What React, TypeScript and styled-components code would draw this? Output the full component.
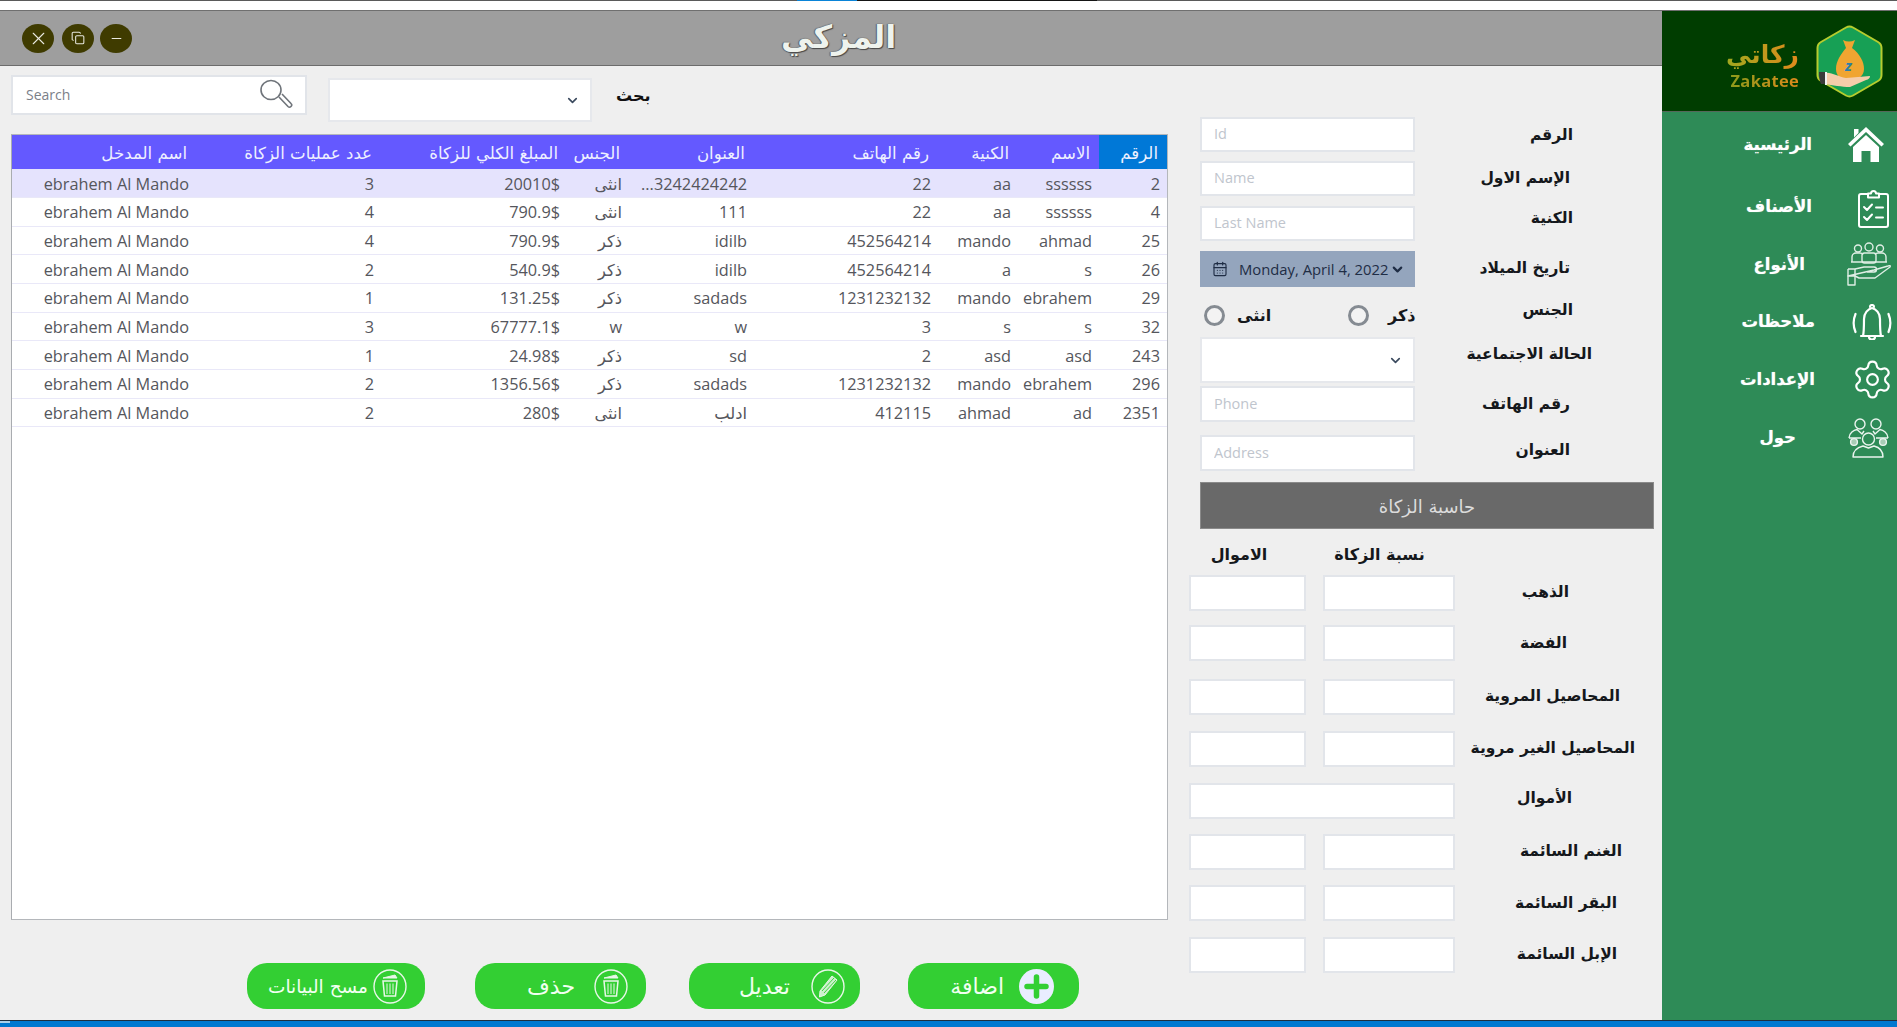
import { FC, ReactElement } from "react";
import styled, { createGlobalStyle } from "styled-components";
import { Settings, CalendarDays, ChevronDown, Copy, X, Minus } from "lucide-react";

const GlobalStyle = createGlobalStyle`
  html, body {
    margin: 0;
    padding: 0;
    height: 100%;
    overflow: hidden;
    background: #efefef;
    font-family: "Open Sans", "DejaVu Sans", sans-serif;
  }
  * { box-sizing: border-box; }
`;

const Page = styled.div`
  width: 1897px;
  height: 1027px;
  display: flex;
  flex-direction: column;
`;

const TopStrip = styled.div`
  height: 11px;
  flex: none;
  background: #fff;
  border-bottom: 1px solid #6f6f6f;
`;

const TopLine = styled.div`
  height: 1px;
  display: flex;
  background: #5a5a5a;
`;

const TopLineGap = styled.div`
  width: 797px;
`;

const TopLineTab = styled.div<{ $w: number; $c: string }>`
  width: ${(p) => p.$w}px;
  background: ${(p) => p.$c};
`;

const Middle = styled.div`
  flex: 1;
  min-height: 0;
  display: flex;
`;

const MainColumn = styled.div`
  width: 1662px;
  display: flex;
  flex-direction: column;
`;

const TitleBar = styled.header`
  height: 55px;
  flex: none;
  background: #9e9e9e;
  border-bottom: 1px solid #6c6c6c;
  display: flex;
  align-items: center;
  padding-left: 22px;
  position: relative;
`;

const WindowButton = styled.div<{ $ml?: number }>`
  width: 32px;
  height: 29px;
  border-radius: 50%;
  margin-left: ${(p) => p.$ml ?? 0}px;
  background: #3f3b00;
  color: #e9e9e0;
  display: flex;
  align-items: center;
  justify-content: center;
`;

const AppTitle = styled.h1`
  position: absolute;
  left: 781px;
  top: 4px;
  margin: 0;
  font-family: "DejaVu Sans", sans-serif;
  font-size: 32px;
  line-height: 44px;
  font-weight: 700;
  color: #eef3ee;
  text-shadow: 0 0 1px #3d3d3d, 1px 1px 1px #4a4a4a, -1px 0 1px #6a6a6a;
`;

const Content = styled.div`
  flex: 1;
  min-height: 0;
  display: flex;
`;

const LeftPane = styled.section`
  width: 1180px;
  flex: none;
  padding: 9px 0 0 11px;
`;

const SearchRow = styled.div`
  height: 47px;
  display: flex;
  align-items: flex-start;
`;

const SearchBox = styled.div`
  width: 296px;
  height: 40px;
  background: #fff;
  border: 2px solid #e1e4e9;
  display: flex;
  align-items: center;
  padding: 0 12px 2px 11px;
`;

const SearchInput = styled.input`
  flex: 1;
  min-width: 0;
  border: none;
  outline: none;
  font-family: "Open Sans", sans-serif;
  font-size: 14px;
  color: #444;
  &::placeholder { color: #7b8088; opacity: 1; }
`;

const PickBox = styled.div<{ $w: number; $h: number }>`
  width: ${(p) => p.$w}px;
  height: ${(p) => p.$h}px;
  background: #fff;
  border: 2px solid #e6e8ec;
  display: flex;
  align-items: center;
  justify-content: flex-end;
  color: #3b4a5e;
  padding-right: 10px;
`;

const SearchPick = styled.div`
  margin: 3px 0 0 21px;
`;

const SearchLabel = styled.span`
  margin: 9px 0 0 24px;
  font-family: "DejaVu Sans", sans-serif;
  font-size: 16px;
  line-height: 24px;
  font-weight: 700;
  color: #111;
`;

const TableFrame = styled.div`
  margin-top: 12px;
  width: 1157px;
  height: 786px;
  background: #fff;
  border: 1px solid #b4b7bb;
  border-left-color: #a9acb0;
`;

const Grid = styled.table`
  width: 1155px;
  table-layout: fixed;
  border-collapse: collapse;
  direction: rtl;
`;

const HeadCell = styled.th<{ $active?: boolean; $w: number }>`
  width: ${(p) => p.$w}px;
  height: 34px;
  padding: 2px 9px 0 0;
  background: ${(p) => (p.$active ? "#0078d7" : "#6459ff")};
  color: #eef0ff;
  font-family: "DejaVu Sans", sans-serif;
  font-size: 16.6px;
  font-weight: 400;
  text-align: right;
  white-space: nowrap;
`;

const BodyRow = styled.tr<{ $selected?: boolean }>`
  height: 28.67px;
  background: ${(p) => (p.$selected ? "#e5e3fd" : "#fff")};
  border-bottom: 1px solid #e9e8f8;
`;

const BodyCell = styled.td`
  padding: 1px 7px 0 0;
  font-family: "Open Sans", "DejaVu Sans", sans-serif;
  font-size: 16.3px;
  color: #55565c;
  text-align: right;
  white-space: nowrap;
  overflow: hidden;
`;

const ActionRow = styled.div`
  margin-top: 43px;
  padding-left: 236px;
  display: flex;
`;

const ActionButton = styled.button<{ $w: number; $ml?: number; $gap: number; $pr: number; $fs?: number }>`
  width: ${(p) => p.$w}px;
  height: 46px;
  margin-left: ${(p) => p.$ml ?? 0}px;
  padding: 0 ${(p) => p.$pr}px 0 0;
  border: none;
  border-radius: 20px;
  background: #33cf33;
  color: #f1fff1;
  display: flex;
  align-items: center;
  justify-content: flex-end;
  gap: ${(p) => p.$gap}px;
  font-family: "DejaVu Sans", sans-serif;
  font-size: ${(p) => p.$fs ?? 22}px;
  font-weight: 400;
`;

const FormPane = styled.section`
  width: 482px;
  flex: none;
  padding: 0 8px 0 9px;
`;

const FieldRow = styled.div<{ $mt: number; $h: number }>`
  margin-top: ${(p) => p.$mt}px;
  height: ${(p) => p.$h}px;
  display: flex;
  align-items: center;
  padding-left: 11px;
  margin-right: -8px;
`;

const CalcRow = styled.div<{ $mt: number }>`
  margin-top: ${(p) => p.$mt}px;
  height: 36px;
  display: flex;
  align-items: center;
  margin-right: -8px;
`;

const FieldLabel = styled.label<{ $pr: number; $lift?: number }>`
  flex: 1;
  text-align: right;
  padding-right: ${(p) => p.$pr}px;
  padding-bottom: ${(p) => p.$lift ?? 0}px;
  font-family: "DejaVu Sans", sans-serif;
  font-size: 15.5px;
  line-height: 24px;
  font-weight: 700;
  color: #15181c;
  white-space: nowrap;
`;

const TextField = styled.input`
  width: 215px;
  height: 100%;
  padding: 0 12px 2px;
  background: #fff;
  border: 2px solid #e2e5ea;
  outline: none;
  font-family: "Open Sans", sans-serif;
  font-size: 14.5px;
  &::placeholder { color: #c0c5cd; opacity: 1; }
`;

const CalcField = styled.input<{ $w: number; $ml?: number }>`
  width: ${(p) => p.$w}px;
  height: 100%;
  margin-left: ${(p) => p.$ml ?? 0}px;
  background: #fff;
  border: 2px solid #e2e5ea;
  outline: none;
`;

const DatePick = styled.div`
  width: 215px;
  height: 100%;
  background: #94a5bd;
  color: #1f2d45;
  display: flex;
  align-items: center;
  padding-left: 12px;
  font-family: "Open Sans", sans-serif;
  font-size: 14.8px;
  white-space: nowrap;
`;

const DateText = styled.span`
  margin: 0 2px 0 11px;
`;

const RadioGroup = styled.div`
  width: 215px;
  height: 100%;
  display: flex;
  align-items: center;
  padding-left: 4px;
`;

const RadioOption = styled.div<{ $w: number; $gap: number }>`
  width: ${(p) => p.$w}px;
  display: flex;
  align-items: center;
  gap: ${(p) => p.$gap}px;
  font-family: "DejaVu Sans", sans-serif;
  font-size: 16px;
  font-weight: 700;
  color: #15181c;
`;

const RadioDot = styled.span`
  width: 21px;
  height: 21px;
  flex: none;
  border-radius: 50%;
  border: 3px solid #858b92;
  background: #f3f3f3;
`;

const CalcHeader = styled.div`
  margin: 11px 0 0 11px;
  height: 47px;
  background: #696969;
  border: 1px solid #8a8a8a;
  color: #dcdcdc;
  display: flex;
  align-items: center;
  justify-content: center;
  font-family: "DejaVu Sans", sans-serif;
  font-size: 18px;
  padding-top: 2px;
`;

const CalcHeads = styled.div`
  margin-top: 11px;
  height: 28px;
  display: flex;
  align-items: center;
`;

const CalcHead = styled.span<{ $w: number; $ml?: number; $pr: number }>`
  width: ${(p) => p.$w}px;
  margin-left: ${(p) => p.$ml ?? 0}px;
  padding-right: ${(p) => p.$pr}px;
  text-align: center;
  font-family: "DejaVu Sans", sans-serif;
  font-size: 16px;
  font-weight: 700;
  color: #15181c;
  white-space: nowrap;
`;

const Sidebar = styled.aside`
  width: 235px;
  flex: none;
  background: #2e8b57;
  display: flex;
  flex-direction: column;
`;

const LogoPanel = styled.div`
  height: 101px;
  flex: none;
  background: #003d00;
  border-bottom: 1px solid #55675a;
  display: flex;
  justify-content: flex-end;
  align-items: center;
  padding-right: 14px;
  gap: 17px;
`;

const LogoWords = styled.div`
  display: flex;
  flex-direction: column;
  align-items: flex-end;
  padding-top: 8px;
`;

const LogoArabic = styled.span`
  font-family: "DejaVu Sans", sans-serif;
  font-size: 25px;
  line-height: 32px;
  font-weight: 700;
  background: linear-gradient(90deg, #9fa81f, #e08a1c);
  -webkit-background-clip: text;
  background-clip: text;
  color: transparent;
`;

const LogoLatin = styled.span`
  font-family: "Open Sans", sans-serif;
  font-size: 16.5px;
  line-height: 20px;
  font-weight: 700;
  letter-spacing: 0.3px;
  background: linear-gradient(90deg, #8e9b1b, #e08a1c);
  -webkit-background-clip: text;
  background-clip: text;
  color: transparent;
`;

const NavItem = styled.div<{ $mt: number }>`
  margin-top: ${(p) => p.$mt}px;
  height: 40px;
  display: flex;
  align-items: center;
`;

const NavLabel = styled.span<{ $pr: number; $lift?: number }>`
  width: 183px;
  flex: none;
  text-align: right;
  padding-right: ${(p) => p.$pr}px;
  padding-bottom: ${(p) => p.$lift ?? 0}px;
  font-family: "DejaVu Sans", sans-serif;
  font-size: 16.5px;
  font-weight: 700;
  color: #fff;
  text-shadow: 0 0 1px rgba(255, 255, 255, 0.6);
  white-space: nowrap;
`;

const NavIcon = styled.span<{ $ml: number }>`
  display: flex;
  margin-left: ${(p) => p.$ml}px;
  color: #fff;
`;

const BottomBar = styled.footer`
  height: 7px;
  flex: none;
  background: #0078d0;
  border-top: 1px solid #1f2f3f;
`;

const BottomTab = styled.div`
  width: 10px;
  height: 2px;
  background: #a9d0ea;
`;

const COLUMNS = [
  { title: "الرقم", width: 68 },
  { title: "الاسم", width: 81 },
  { title: "الكنية", width: 80 },
  { title: "رقم الهاتف", width: 184 },
  { title: "العنوان", width: 125 },
  { title: "الجنس", width: 62 },
  { title: "المبلغ الكلي للزكاة", width: 186 },
  { title: "عدد عمليات الزكاة", width: 185 },
  { title: "اسم المدخل", width: 184 },
];

const USER = "ebrahem Al Mando";

const ROWS = [
  ["2", "ssssss", "aa", "22", "3242424242...", "انثى", "20010$", "3", USER],
  ["4", "ssssss", "aa", "22", "111", "انثى", "790.9$", "4", USER],
  ["25", "ahmad", "mando", "452564214", "idilb", "ذكر", "790.9$", "4", USER],
  ["26", "s", "a", "452564214", "idilb", "ذكر", "540.9$", "2", USER],
  ["29", "ebrahem", "mando", "1231232132", "sadads", "ذكر", "131.25$", "1", USER],
  ["32", "s", "s", "3", "w", "w", "67777.1$", "3", USER],
  ["243", "asd", "asd", "2", "sd", "ذكر", "24.98$", "1", USER],
  ["296", "ebrahem", "mando", "1231232132", "sadads", "ذكر", "1356.56$", "2", USER],
  ["2351", "ad", "ahmad", "412115", "ادلب", "انثى", "280$", "2", USER],
];

const CALC_ROWS = [
  { label: "الذهب", mt: 7, pr: 93, lift: 2 },
  { label: "الفضة", mt: 14, pr: 95, lift: 0 },
  { label: "المحاصيل المروية", mt: 18, pr: 42, lift: 2 },
  { label: "المحاصيل الغير مروية", mt: 16, pr: 27, lift: 2 },
  { label: "الأموال", mt: 16, pr: 90, lift: 6, wide: true },
  { label: "الغنم السائمة", mt: 15, pr: 40, lift: 2 },
  { label: "البقر السائمة", mt: 15, pr: 45, lift: 0 },
  { label: "الإبل السائمة", mt: 16, pr: 45, lift: 2 },
];

const MagnifierIcon: FC = (): ReactElement => (
  <svg width="34" height="30" viewBox="0 0 34 30" fill="none" stroke="#6f747a">
    <ellipse cx="12" cy="11" rx="10" ry="9.5" strokeWidth="1.6" />
    <path d="M20 18 L29 27.5 a2 2 0 0 0 3 -3 L23 15" strokeWidth="1.6" />
  </svg>
);

const HomeIcon: FC = (): ReactElement => (
  <svg width="36" height="36" viewBox="0 0 36 36" fill="#fff">
    <path d="M18 1 L36 18 L33.5 20.5 L18 6 L2.5 20.5 L0 18 Z" />
    <path d="M6 3 H10.5 V7 L6 11.5 Z" />
    <path d="M18 9 L31 21 V36 H22.5 V25 H13.5 V36 H5 V21 Z" />
  </svg>
);

const ClipboardIcon: FC = (): ReactElement => (
  <svg width="31" height="40" viewBox="0 0 31 40" fill="none" stroke="#fff" strokeWidth="2" strokeLinecap="round" strokeLinejoin="round">
    <path d="M10 6 H3 a2 2 0 0 0 -2 2 V37 a2 2 0 0 0 2 2 H28 a2 2 0 0 0 2 -2 V8 a2 2 0 0 0 -2 -2 H21" />
    <path d="M10 9.5 V5.5 H13 a2.5 2.5 0 0 1 5 0 H21 V9.5 Z" />
    <path d="M6 19 L9 22 L14 16.5" />
    <path d="M18 19.5 H25" />
    <path d="M6 29 L9 32 L14 26.5" />
    <path d="M18 29.5 H25" />
  </svg>
);

const CareIcon: FC = (): ReactElement => (
  <svg width="44" height="44" viewBox="0 0 44 44" fill="none" stroke="#dfeee5" strokeWidth="1.4" strokeLinejoin="round">
    <circle cx="11" cy="6.5" r="3.5" />
    <circle cx="22" cy="5" r="4" />
    <circle cx="33" cy="6.5" r="3.5" />
    <path d="M5 20 V15 a4 4 0 0 1 4 -4 H13 a4 4 0 0 1 3 1.5" />
    <path d="M39 20 V15 a4 4 0 0 0 -4 -4 H31 a4 4 0 0 0 -3 1.5" />
    <rect x="15" y="11" width="14" height="10" rx="2.5" />
    <path d="M4 20 H40" />
    <path d="M1 27 H8 L17 25 H27 a2 2 0 0 1 0 5 H20 M27 28 L41 24 q3 -1 2 1 L28 36 H12 L8 34 H1 Z" />
    <path d="M1 27 V43 H8 V27" />
  </svg>
);

const BellIcon: FC = (): ReactElement => (
  <svg width="40" height="36" viewBox="0 0 40 36" fill="none" stroke="#fff" strokeWidth="2.2" strokeLinecap="round" strokeLinejoin="round">
    <path d="M9 32 H31 M11 32 C12 28 12 24 12 15 C12 9 16 5 20 4 C24 5 28 9 28 15 C28 24 28 28 29 32" />
    <path d="M18 3 a2 2 0 0 1 4 0" />
    <path d="M17 33 a3 2.5 0 0 0 6 0" />
    <path d="M3.5 10 C1 16 1 22 3.5 28" />
    <path d="M36.5 10 C39 16 39 22 36.5 28" />
  </svg>
);

const TeamIcon: FC = (): ReactElement => (
  <svg width="41" height="40" viewBox="0 0 41 40" fill="none" stroke="#eaf4ee" strokeWidth="1.4" strokeLinejoin="round">
    <circle cx="12" cy="6" r="5" />
    <circle cx="28" cy="6" r="5" />
    <path d="M1 20 C1 15 6 12 9 11.5 L14 16 L16 13" />
    <path d="M40 20 C40 15 35 12 32 11.5 L27 16 L25 13" />
    <path d="M1 20 H13 M28 20 H40" />
    <circle cx="20.5" cy="21" r="6" />
    <circle cx="6" cy="24" r="3.4" fill="#a8cdb6" />
    <circle cx="35" cy="24" r="3.4" fill="#a8cdb6" />
    <path d="M5 39 C5 32 11 29 15 28 L20.5 30 L26 28 C30 29 35 32 35 39 Z" />
  </svg>
);

const TrashBadge: FC = (): ReactElement => (
  <svg width="34" height="35" viewBox="0 0 34 35" fill="none" stroke="#e8f7e8">
    <ellipse cx="17" cy="17.5" rx="16" ry="16.5" strokeWidth="1.4" />
    <path d="M10 9 L22 6 L24 9 Z" fill="#e8f7e8" strokeWidth="1" />
    <path d="M10 12 H24 L22.5 27 H11.5 Z" strokeWidth="1.5" />
    <path d="M14 14.5 V25 M17 14.5 V25 M20 14.5 V25" strokeWidth="1" />
  </svg>
);

const PencilBadge: FC = (): ReactElement => (
  <svg width="34" height="35" viewBox="0 0 34 35" fill="none" stroke="#e8f7e8">
    <ellipse cx="17" cy="17.5" rx="16" ry="16.5" strokeWidth="1.4" />
    <path d="M21 7 L26 11 L14 26 L8.5 28 L9 22 Z" fill="#e8f7e8" fillOpacity="0.85" strokeWidth="1" />
    <path d="M11 22 L23 9 M13 24 L25 11" stroke="#33cf33" strokeWidth="0.9" />
  </svg>
);

const PlusBadge: FC = (): ReactElement => (
  <svg width="35" height="35" viewBox="0 0 35 35">
    <ellipse cx="17.5" cy="17.5" rx="17.5" ry="17.5" fill="#e9edff" />
    <path d="M17.5 8 V27 M8 17.5 H27" stroke="#33cf33" strokeWidth="5.5" strokeLinecap="round" />
  </svg>
);

const ZakateeLogo: FC = (): ReactElement => (
  <svg width="67" height="73" viewBox="0 0 67 73">
    <path
      d="M30 2.5 Q33.5 0.5 37 2.5 L62 17 Q65.5 19 65.5 23 V50 Q65.5 54 62 56 L37 70.5 Q33.5 72.5 30 70.5 L5 56 Q1.5 54 1.5 50 V23 Q1.5 19 5 17 Z"
      fill="#17a055"
      stroke="#b6cc2e"
      strokeWidth="2"
    />
    <path
      d="M27 15 Q33 18 39 15 L36 23 C44 29 48 37 48 44 C48 52 41 55 33 55 C25 55 20 51 20 44 C20 36 25 29 30 23 Z"
      fill="#f0a531"
    />
    <text x="29" y="46" fontFamily="Open Sans, sans-serif" fontSize="15" fontWeight="700" fontStyle="italic" fill="#2a7fa8">z</text>
    <path d="M9 48 C16 47 22 52 30 53 L54 51 Q54 54 50 55 L34 62 C26 62 16 60 9 59 Z" fill="#f5cdaa" />
    <path d="M3 47 H9 V59 H5 Q3 55 3 47 Z" fill="#3a3a3a" />
    <path d="M9 47 H11 V60 H9 Z" fill="#f2f2f2" />
  </svg>
);

export const App: FC = (): ReactElement => {
  return (
    <Page>
      <GlobalStyle />
      <TopStrip>
        <TopLine>
          <TopLineGap />
          <TopLineTab $w={60} $c="#0a84d8" />
          <TopLineTab $w={240} $c="#151515" />
        </TopLine>
      </TopStrip>
      <Middle>
        <MainColumn>
          <TitleBar>
            <WindowButton><X size={21} strokeWidth={1.3} /></WindowButton>
            <WindowButton $ml={8}><Copy size={14} strokeWidth={1.8} /></WindowButton>
            <WindowButton $ml={6}><Minus size={15} strokeWidth={1.6} /></WindowButton>
            <AppTitle>المزكي</AppTitle>
          </TitleBar>
          <Content>
            <LeftPane>
              <SearchRow>
                <SearchBox>
                  <SearchInput placeholder="Search" />
                  <MagnifierIcon />
                </SearchBox>
                <SearchPick>
                  <PickBox $w={264} $h={44}><ChevronDown size={15} strokeWidth={2.6} /></PickBox>
                </SearchPick>
                <SearchLabel>بحث</SearchLabel>
              </SearchRow>
              <TableFrame>
                <Grid>
                  <thead>
                    <tr>
                      {COLUMNS.map((col, index) => (
                        <HeadCell key={col.title} $w={col.width} $active={index === 0}>{col.title}</HeadCell>
                      ))}
                    </tr>
                  </thead>
                  <tbody>
                    {ROWS.map((row, index) => (
                      <BodyRow key={row[0]} $selected={index === 0}>
                        {row.map((value, cell) => (
                          <BodyCell key={cell}>{value}</BodyCell>
                        ))}
                      </BodyRow>
                    ))}
                  </tbody>
                </Grid>
              </TableFrame>
              <ActionRow>
                <ActionButton $w={178} $gap={5} $pr={18} $fs={18.5}>مسح البيانات<TrashBadge /></ActionButton>
                <ActionButton $w={171} $ml={50} $gap={19} $pr={18}>حذف<TrashBadge /></ActionButton>
                <ActionButton $w={171} $ml={43} $gap={21} $pr={15}>تعديل<PencilBadge /></ActionButton>
                <ActionButton $w={171} $ml={48} $gap={15} $pr={25}>اضافة<PlusBadge /></ActionButton>
              </ActionRow>
            </LeftPane>
            <FormPane>
              <FieldRow $mt={51} $h={35}>
                <TextField placeholder="Id" />
                <FieldLabel $pr={89}>الرقم</FieldLabel>
              </FieldRow>
              <FieldRow $mt={9} $h={35}>
                <TextField placeholder="Name" />
                <FieldLabel $pr={92} $lift={2}>الإسم الاول</FieldLabel>
              </FieldRow>
              <FieldRow $mt={10} $h={35}>
                <TextField placeholder="Last Name" />
                <FieldLabel $pr={89} $lift={12}>الكنية</FieldLabel>
              </FieldRow>
              <FieldRow $mt={10} $h={36}>
                <DatePick>
                  <CalendarDays size={16} strokeWidth={1.7} />
                  <DateText>Monday, April 4, 2022</DateText>
                  <ChevronDown size={15} strokeWidth={3.4} />
                </DatePick>
                <FieldLabel $pr={92} $lift={2}>تاريخ الميلاد</FieldLabel>
              </FieldRow>
              <FieldRow $mt={13} $h={30}>
                <RadioGroup>
                  <RadioOption $w={144} $gap={12}><RadioDot />انثى</RadioOption>
                  <RadioOption $w={66} $gap={19}><RadioDot />ذكر</RadioOption>
                </RadioGroup>
                <FieldLabel $pr={89} $lift={10}>الجنس</FieldLabel>
              </FieldRow>
              <FieldRow $mt={7} $h={46}>
                <PickBox $w={215} $h={46}><ChevronDown size={15} strokeWidth={2.6} /></PickBox>
                <FieldLabel $pr={70} $lift={12}>الحالة الاجتماعية</FieldLabel>
              </FieldRow>
              <FieldRow $mt={3} $h={36}>
                <TextField placeholder="Phone" />
                <FieldLabel $pr={92}>رقم الهاتف</FieldLabel>
              </FieldRow>
              <FieldRow $mt={13} $h={36}>
                <TextField placeholder="Address" />
                <FieldLabel $pr={92} $lift={6}>العنوان</FieldLabel>
              </FieldRow>
              <CalcHeader>حاسبة الزكاة</CalcHeader>
              <CalcHeads>
                <CalcHead $w={117} $pr={17}>الاموال</CalcHead>
                <CalcHead $w={132} $ml={17} $pr={19}>نسبة الزكاة</CalcHead>
              </CalcHeads>
              {CALC_ROWS.map((row) => (
                <CalcRow key={row.label} $mt={row.mt}>
                  {row.wide ? (
                    <CalcField $w={266} />
                  ) : (
                    <>
                      <CalcField $w={117} />
                      <CalcField $w={132} $ml={17} />
                    </>
                  )}
                  <FieldLabel $pr={row.pr} $lift={row.lift}>{row.label}</FieldLabel>
                </CalcRow>
              ))}
            </FormPane>
          </Content>
        </MainColumn>
        <Sidebar>
          <LogoPanel>
            <LogoWords>
              <LogoArabic>زكاتي</LogoArabic>
              <LogoLatin>Zakatee</LogoLatin>
            </LogoWords>
            <ZakateeLogo />
          </LogoPanel>
          <NavItem $mt={12}>
            <NavLabel $pr={33}>الرئيسية</NavLabel>
            <NavIcon $ml={3}><HomeIcon /></NavIcon>
          </NavItem>
          <NavItem $mt={24}>
            <NavLabel $pr={33} $lift={4}>الأصناف</NavLabel>
            <NavIcon $ml={13}><ClipboardIcon /></NavIcon>
          </NavItem>
          <NavItem $mt={16}>
            <NavLabel $pr={40}>الأنواع</NavLabel>
            <NavIcon $ml={2}><CareIcon /></NavIcon>
          </NavItem>
          <NavItem $mt={18}>
            <NavLabel $pr={30} $lift={2}>ملاحظات</NavLabel>
            <NavIcon $ml={7}><BellIcon /></NavIcon>
          </NavItem>
          <NavItem $mt={17}>
            <NavLabel $pr={30}>الإعدادات</NavLabel>
            <NavIcon $ml={6}><Settings size={43} strokeWidth={1.2} /></NavIcon>
          </NavItem>
          <NavItem $mt={19}>
            <NavLabel $pr={49} $lift={2}>حول</NavLabel>
            <NavIcon $ml={3}><TeamIcon /></NavIcon>
          </NavItem>
        </Sidebar>
      </Middle>
      <BottomBar><BottomTab /></BottomBar>
    </Page>
  );
};

export default App;
